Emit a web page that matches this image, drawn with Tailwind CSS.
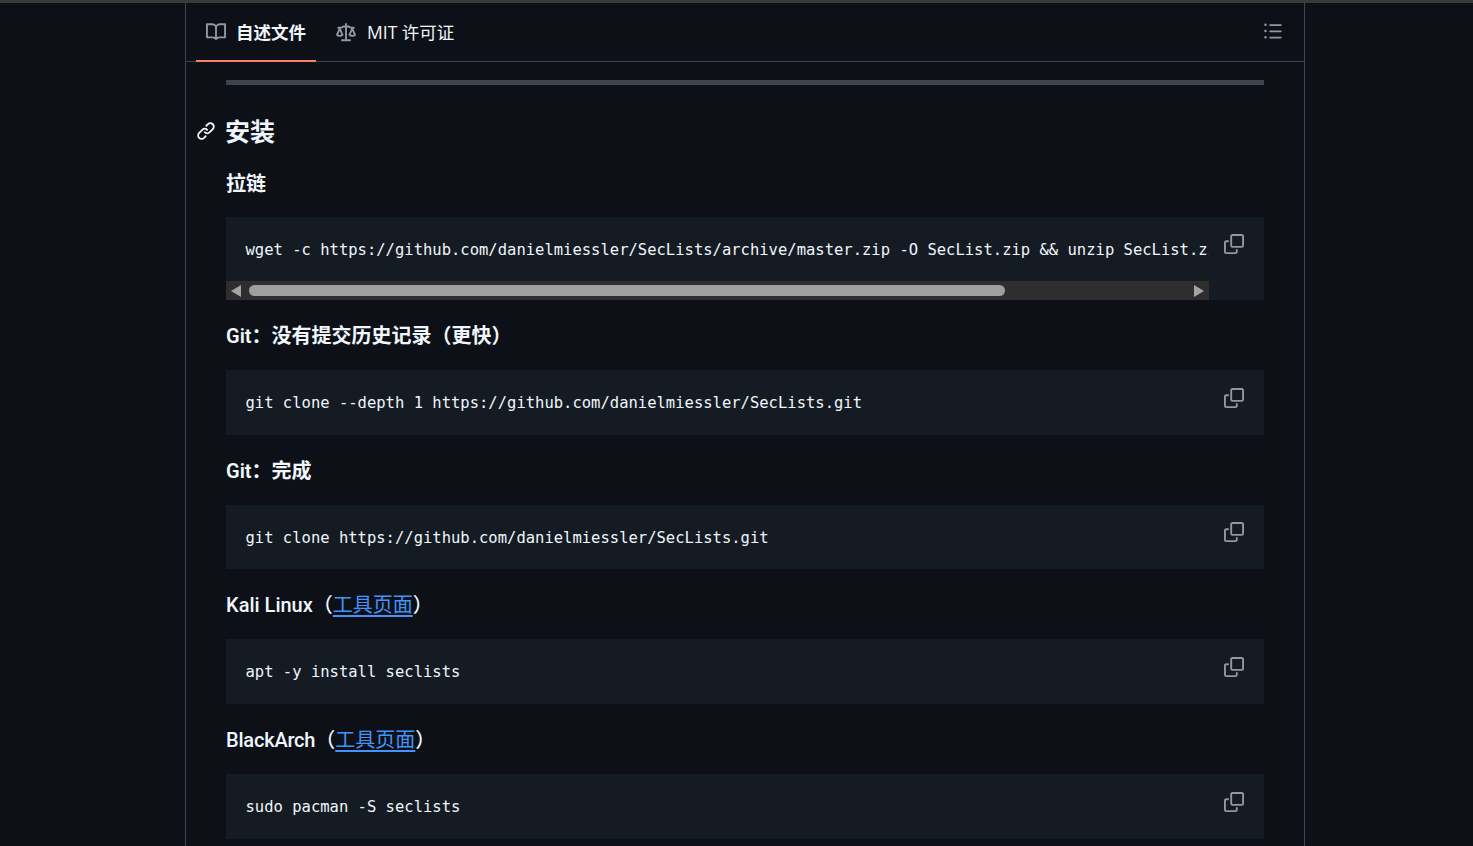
<!DOCTYPE html>
<html lang="zh-CN">
<head>
    <meta charset="UTF-8">
    <title>SecLists</title>
    <script src="https://cdn.jsdelivr.net/npm/@tailwindcss/browser@4"></script>
</head>
<body class="bg-[#0d1117] h-[846px] overflow-hidden text-[#f0f6fc] font-['Open_Sans','Noto_Sans_CJK_SC',sans-serif]">
    <div class="h-[3px] bg-[#3a3a3a]"></div>
    <div class="ml-[185px] w-[1120px] h-[843px] border-x border-[#3d444d] overflow-hidden">
        <!-- tabs -->
        <div class="h-[58px] border-b border-[#3d444d] pl-[10px] pr-[21px] flex justify-between box-content">
            <div class="flex">
                <div class="w-[120px] h-[59px] border-b-2 border-[#f78166] flex items-center pl-[10px] gap-[10px]">
                    <svg width="20" height="20" viewBox="0 0 16 16" fill="#9198a1"><path d="M0 1.75A.75.75 0 0 1 .75 1h4.253c1.227 0 2.317.59 3 1.501A3.743 3.743 0 0 1 11.006 1h4.245a.75.75 0 0 1 .75.75v10.5a.75.75 0 0 1-.75.75h-4.507a2.25 2.25 0 0 0-1.591.659l-.622.621a.75.75 0 0 1-1.06 0l-.622-.621A2.25 2.25 0 0 0 5.258 13H.75a.75.75 0 0 1-.75-.75Zm7.251 10.324.004-5.073-.002-2.253A2.25 2.25 0 0 0 5.003 2.5H1.5v9h3.757a3.75 3.75 0 0 1 1.994.574ZM8.755 4.75l-.004 7.322a3.752 3.752 0 0 1 1.992-.572H14.5v-9h-3.495a2.25 2.25 0 0 0-2.25 2.25Z"/></svg>
                    <span class="text-[17.5px] font-bold pt-[1px]">自述文件</span>
                </div>
                <div class="h-[59px] flex items-center pl-[20px] gap-[11px]">
                    <svg width="20" height="20" viewBox="0 0 16 16" fill="#9198a1"><path d="M8.75.75V2h.985c.304 0 .603.08.867.231l1.29.736c.038.022.08.033.124.033h2.234a.75.75 0 0 1 0 1.5h-.427l2.111 4.692a.75.75 0 0 1-.154.838l-.53-.53.529.531-.001.002-.002.002-.006.006-.006.005-.01.01-.045.04c-.21.176-.441.327-.686.45C14.556 10.78 13.88 11 13 11a4.498 4.498 0 0 1-2.023-.454 3.544 3.544 0 0 1-.686-.45l-.045-.04-.016-.015-.006-.006-.004-.004v-.001a.75.75 0 0 1-.154-.838L12.178 4.5h-.162c-.305 0-.604-.079-.868-.231l-1.29-.736a.245.245 0 0 0-.124-.033H8.75V13h2.5a.75.75 0 0 1 0 1.5h-6.5a.75.75 0 0 1 0-1.5h2.5V3.5h-.984a.245.245 0 0 0-.124.033l-1.289.737c-.265.15-.564.23-.869.23h-.162l2.112 4.692a.75.75 0 0 1-.154.838l-.53-.53.529.531-.001.002-.002.002-.006.006-.016.015-.045.04c-.21.176-.441.327-.686.45C4.556 10.78 3.88 11 3 11a4.498 4.498 0 0 1-2.023-.454 3.544 3.544 0 0 1-.686-.45l-.045-.04-.016-.015-.006-.006-.004-.004v-.001a.75.75 0 0 1-.154-.838L2.178 4.5H1.75a.75.75 0 0 1 0-1.5h2.234a.249.249 0 0 0 .125-.033l1.288-.737c.265-.15.564-.23.869-.23h.984V.75a.75.75 0 0 1 1.5 0Zm2.945 8.477c.285.135.718.273 1.305.273s1.02-.138 1.305-.273L13 6.327Zm-10 0c.285.135.718.273 1.305.273s1.02-.138 1.305-.273L3 6.327Z"/></svg>
                    <span class="text-[17.5px]">MIT 许可证</span>
                </div>
            </div>
            <div class="flex items-center pb-[2px]">
                <svg width="20" height="20" viewBox="0 0 16 16" fill="#9198a1"><path d="M5.75 2.5h8.5a.75.75 0 0 1 0 1.5h-8.5a.75.75 0 0 1 0-1.5Zm0 5h8.5a.75.75 0 0 1 0 1.5h-8.5a.75.75 0 0 1 0-1.5Zm0 5h8.5a.75.75 0 0 1 0 1.5h-8.5a.75.75 0 0 1 0-1.5ZM2 14a1 1 0 1 1 0-2 1 1 0 0 1 0 2Zm1-6a1 1 0 1 1-2 0 1 1 0 0 1 2 0ZM2 4a1 1 0 1 1 0-2 1 1 0 0 1 0 2Z"/></svg>
            </div>
        </div>

        <!-- readme -->
        <article class="px-[40px]">
            <div class="h-[5px] mt-[18px] w-[1038px] bg-[#3d444d]"></div>

            <h2 class="relative mt-[29px] h-[36px] leading-[34px] text-[25px] font-bold">
                <svg class="absolute left-[-30px] top-[7px]" width="20" height="20" viewBox="0 0 16 16" fill="#f0f6fc"><path d="m7.775 3.275 1.25-1.25a3.5 3.5 0 1 1 4.95 4.95l-2.5 2.5a3.5 3.5 0 0 1-4.95 0 .751.751 0 0 1 .018-1.042.751.751 0 0 1 1.042-.018 1.998 1.998 0 0 0 2.83 0l2.5-2.5a2.002 2.002 0 0 0-2.83-2.83l-1.25 1.25a.751.751 0 0 1-1.042-.018.751.751 0 0 1-.018-1.042Zm-4.69 9.64a1.998 1.998 0 0 0 2.83 0l1.25-1.25a.751.751 0 0 1 1.042.018.751.751 0 0 1 .018 1.042l-1.25 1.25a3.5 3.5 0 1 1-4.95-4.95l2.5-2.5a3.5 3.5 0 0 1 4.95 0 .751.751 0 0 1-.018 1.042.751.751 0 0 1-1.042.018 1.998 1.998 0 0 0-2.83 0l-2.5 2.5a1.998 1.998 0 0 0 0 2.83Z"/></svg>
                <span class="ml-[-1px]">安装</span>
            </h2>

            <h3 class="mt-[19px] h-[30px] leading-[30px] text-[20px] font-semibold">拉链</h3>
            <!-- zip block has its own scrollbar -->
            <div class="relative mt-[18px] h-[83px] w-[1038px] bg-[#151b23]">
                <div class="w-[983px] h-[64px] pl-[19.5px] pt-[4px] flex items-center overflow-hidden">
                    <code class="whitespace-pre text-[15.52px] font-['DejaVu_Sans_Mono',monospace]">wget -c https://github.com/danielmiessler/SecLists/archive/master.zip -O SecList.zip &amp;&amp; unzip SecList.zip</code>
                </div>
                <div class="w-[983px] h-[19px] bg-[#2e2e2e] flex items-center pl-[5px] gap-[8px]">
                    <div class="w-0 h-0 border-y-[6px] border-y-transparent border-r-[10px] border-r-[#a3a3a3]"></div>
                    <div class="w-[756px] h-[11px] rounded-full bg-[#9f9f9f]"></div>
                    <div class="ml-auto mr-[5px] w-0 h-0 border-y-[6px] border-y-transparent border-l-[10px] border-l-[#a3a3a3]"></div>
                </div>
                <svg class="absolute left-[998px] top-[17px]" width="20" height="20" viewBox="0 0 16 16" fill="#9198a1"><path d="M0 6.75C0 5.784.784 5 1.75 5h1.5a.75.75 0 0 1 0 1.5h-1.5a.25.25 0 0 0-.25.25v7.5c0 .138.112.25.25.25h7.5a.25.25 0 0 0 .25-.25v-1.5a.75.75 0 0 1 1.5 0v1.5A1.75 1.75 0 0 1 9.25 16h-7.5A1.75 1.75 0 0 1 0 14.25Z"/><path d="M5 1.75C5 .784 5.784 0 6.75 0h7.5C15.216 0 16 .784 16 1.75v7.5A1.75 1.75 0 0 1 14.25 11h-7.5A1.75 1.75 0 0 1 5 9.25Zm1.75-.25a.25.25 0 0 0-.25.25v7.5c0 .138.112.25.25.25h7.5a.25.25 0 0 0 .25-.25v-7.5a.25.25 0 0 0-.25-.25Z"/></svg>
            </div>

            <h3 class="mt-[21px] h-[30px] leading-[30px] text-[20px] font-semibold font-['Roboto','Noto_Sans_CJK_SC',sans-serif]">Git：没有提交历史记录（更快）</h3>
            <div class="relative mt-[19px] h-[64.67px] w-[1038px] bg-[#151b23] pl-[19.5px] pt-[2px] flex items-center">
                <code class="whitespace-pre text-[15.52px] font-['DejaVu_Sans_Mono',monospace]">git clone --depth 1 https://github.com/danielmiessler/SecLists.git</code>
                <svg class="absolute left-[998px] top-[18px]" width="20" height="20" viewBox="0 0 16 16" fill="#9198a1"><path d="M0 6.75C0 5.784.784 5 1.75 5h1.5a.75.75 0 0 1 0 1.5h-1.5a.25.25 0 0 0-.25.25v7.5c0 .138.112.25.25.25h7.5a.25.25 0 0 0 .25-.25v-1.5a.75.75 0 0 1 1.5 0v1.5A1.75 1.75 0 0 1 9.25 16h-7.5A1.75 1.75 0 0 1 0 14.25Z"/><path d="M5 1.75C5 .784 5.784 0 6.75 0h7.5C15.216 0 16 .784 16 1.75v7.5A1.75 1.75 0 0 1 14.25 11h-7.5A1.75 1.75 0 0 1 5 9.25Zm1.75-.25a.25.25 0 0 0-.25.25v7.5c0 .138.112.25.25.25h7.5a.25.25 0 0 0 .25-.25v-7.5a.25.25 0 0 0-.25-.25Z"/></svg>
            </div>

            <h3 class="mt-[21px] h-[30px] leading-[30px] text-[20px] font-semibold font-['Roboto','Noto_Sans_CJK_SC',sans-serif]">Git：完成</h3>
            <div class="relative mt-[19px] h-[64.67px] w-[1038px] bg-[#151b23] pl-[19.5px] pt-[3px] flex items-center">
                <code class="whitespace-pre text-[15.52px] font-['DejaVu_Sans_Mono',monospace]">git clone https://github.com/danielmiessler/SecLists.git</code>
                <svg class="absolute left-[998px] top-[17.5px]" width="20" height="20" viewBox="0 0 16 16" fill="#9198a1"><path d="M0 6.75C0 5.784.784 5 1.75 5h1.5a.75.75 0 0 1 0 1.5h-1.5a.25.25 0 0 0-.25.25v7.5c0 .138.112.25.25.25h7.5a.25.25 0 0 0 .25-.25v-1.5a.75.75 0 0 1 1.5 0v1.5A1.75 1.75 0 0 1 9.25 16h-7.5A1.75 1.75 0 0 1 0 14.25Z"/><path d="M5 1.75C5 .784 5.784 0 6.75 0h7.5C15.216 0 16 .784 16 1.75v7.5A1.75 1.75 0 0 1 14.25 11h-7.5A1.75 1.75 0 0 1 5 9.25Zm1.75-.25a.25.25 0 0 0-.25.25v7.5c0 .138.112.25.25.25h7.5a.25.25 0 0 0 .25-.25v-7.5a.25.25 0 0 0-.25-.25Z"/></svg>
            </div>

            <h3 class="mt-[21px] h-[30px] leading-[30px] text-[20px] font-medium font-['Roboto','Noto_Sans_CJK_SC',sans-serif]">Kali Linux（<a href="#" class="font-normal text-[#4493f8] underline underline-offset-[3px]">工具页面</a>）</h3>
            <div class="relative mt-[19px] h-[64.67px] w-[1038px] bg-[#151b23] pl-[19.5px] pt-[2px] flex items-center">
                <code class="whitespace-pre text-[15.52px] font-['DejaVu_Sans_Mono',monospace]">apt -y install seclists</code>
                <svg class="absolute left-[998px] top-[18px]" width="20" height="20" viewBox="0 0 16 16" fill="#9198a1"><path d="M0 6.75C0 5.784.784 5 1.75 5h1.5a.75.75 0 0 1 0 1.5h-1.5a.25.25 0 0 0-.25.25v7.5c0 .138.112.25.25.25h7.5a.25.25 0 0 0 .25-.25v-1.5a.75.75 0 0 1 1.5 0v1.5A1.75 1.75 0 0 1 9.25 16h-7.5A1.75 1.75 0 0 1 0 14.25Z"/><path d="M5 1.75C5 .784 5.784 0 6.75 0h7.5C15.216 0 16 .784 16 1.75v7.5A1.75 1.75 0 0 1 14.25 11h-7.5A1.75 1.75 0 0 1 5 9.25Zm1.75-.25a.25.25 0 0 0-.25.25v7.5c0 .138.112.25.25.25h7.5a.25.25 0 0 0 .25-.25v-7.5a.25.25 0 0 0-.25-.25Z"/></svg>
            </div>

            <h3 class="mt-[21px] h-[30px] leading-[30px] text-[20px] font-medium font-['Roboto','Noto_Sans_CJK_SC',sans-serif]"><span class="tracking-[-0.2px]">BlackArch</span>（<a href="#" class="font-normal text-[#4493f8] underline underline-offset-[3px]">工具页面</a>）</h3>
            <div class="relative mt-[19px] h-[64.67px] w-[1038px] bg-[#151b23] pl-[19.5px] pt-[2px] flex items-center">
                <code class="whitespace-pre text-[15.52px] font-['DejaVu_Sans_Mono',monospace]">sudo pacman -S seclists</code>
                <svg class="absolute left-[998px] top-[18px]" width="20" height="20" viewBox="0 0 16 16" fill="#9198a1"><path d="M0 6.75C0 5.784.784 5 1.75 5h1.5a.75.75 0 0 1 0 1.5h-1.5a.25.25 0 0 0-.25.25v7.5c0 .138.112.25.25.25h7.5a.25.25 0 0 0 .25-.25v-1.5a.75.75 0 0 1 1.5 0v1.5A1.75 1.75 0 0 1 9.25 16h-7.5A1.75 1.75 0 0 1 0 14.25Z"/><path d="M5 1.75C5 .784 5.784 0 6.75 0h7.5C15.216 0 16 .784 16 1.75v7.5A1.75 1.75 0 0 1 14.25 11h-7.5A1.75 1.75 0 0 1 5 9.25Zm1.75-.25a.25.25 0 0 0-.25.25v7.5c0 .138.112.25.25.25h7.5a.25.25 0 0 0 .25-.25v-7.5a.25.25 0 0 0-.25-.25Z"/></svg>
            </div>
        </article>
    </div>
</body>
</html>
